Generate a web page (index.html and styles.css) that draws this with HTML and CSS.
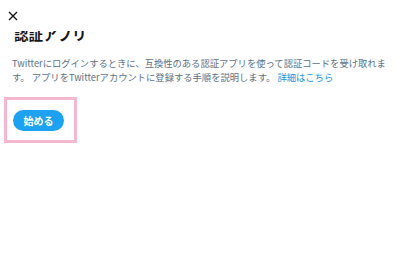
FILE: index.html
```html
<!DOCTYPE html>
<html lang="ja">
<head>
<meta charset="utf-8">
<link rel="stylesheet" href="styles.css">
</head>
<body>
<div class="page">
  <div class="header">
    <svg class="close" width="10" height="10" viewBox="0 0 10 10"><path d="M1 1L9 9M9 1L1 9" stroke="#14171a" stroke-width="1.4" fill="none"/></svg>
  </div>
  <div class="title-wrap"><h1 class="title">認証アプリ</h1></div>
  <p class="desc">Twitterにログインするときに、互換性のある認証アプリを使って認証コードを受け取れます。 アプリをTwitterアカウントに登録する手順を説明します。 <a class="link">詳細はこちら</a></p>
  <div class="action">
    <button class="start">始める</button>
  </div>
</div>
</body>
</html>
```
FILE: styles.css
```css
html, body { margin: 0; padding: 0; background: #fff; }
body { font-family: "Noto Sans CJK JP", "Liberation Sans", sans-serif; color: #14171a; }
.page { width: 400px; height: 258px; overflow: hidden; }
.header { height: 31px; display: flex; align-items: center; padding-left: 8px; background: #fff; }
.close { display: block; margin-top: 1px; }
.title-wrap { height: 11px; overflow: hidden; padding-left: 14px; display: flex; align-items: flex-end; }
.title { margin: 0 0 -1px 0; font-size: 14.5px; line-height: 18px; font-weight: 700; }
.desc { margin: 14px 0 0 12px; width: 378px; font-size: 9.3px; line-height: 14px; color: #5b7083; }
.link { color: #1b95e0; }
.action { margin: 13px 0 0 4px; width: 61px; height: 40px; border: 3px solid #f5b7cf; display: flex; align-items: center; padding-left: 6px; }
.start { width: 51px; height: 21px; border: none; border-radius: 11px; background: #1da1f2; color: #fff; font-family: inherit; font-size: 10px; font-weight: 700; padding: 0; }
```
